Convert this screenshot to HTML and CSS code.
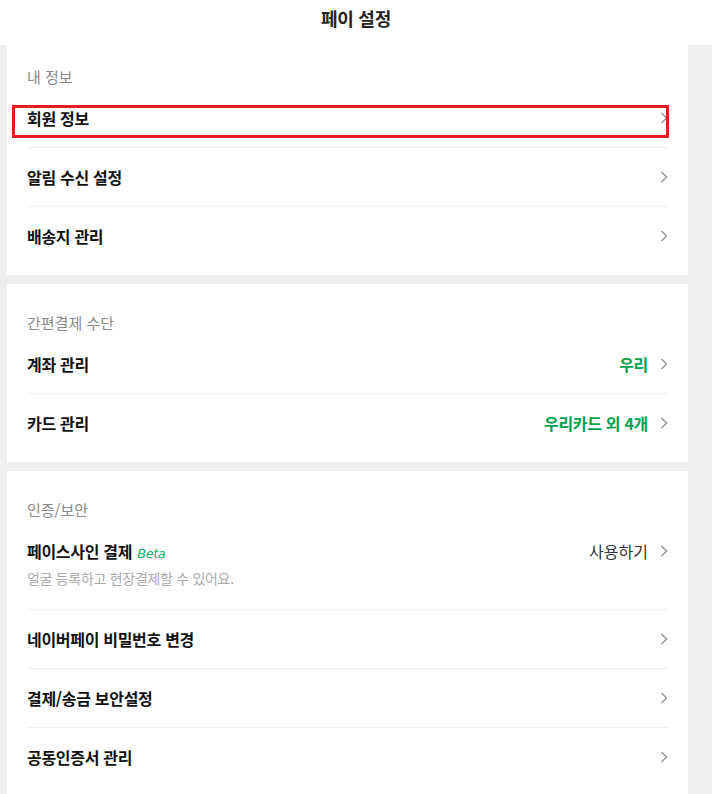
FILE: index.html
```html
<!DOCTYPE html>
<html lang="ko">
<head>
<meta charset="utf-8">
<title>페이 설정</title>
<link rel="stylesheet" href="styles.css">
</head>
<body>
<header class="top">
  <h1 class="top-title">페이 설정</h1>
</header>
<main class="page">
  <section class="card card-first">
    <h2 class="card-label">내 정보</h2>
    <div class="row row-marked">
      <span class="row-title">회원 정보</span>
      <span class="row-right"><svg class="chev" viewBox="0 0 8 12" width="8" height="12"><path d="M1.5 1 L6.5 6 L1.5 11" /></svg></span>
      <span class="mark"></span>
    </div>
    <div class="row">
      <span class="row-title">알림 수신 설정</span>
      <span class="row-right"><svg class="chev" viewBox="0 0 8 12" width="8" height="12"><path d="M1.5 1 L6.5 6 L1.5 11" /></svg></span>
    </div>
    <div class="row">
      <span class="row-title">배송지 관리</span>
      <span class="row-right"><svg class="chev" viewBox="0 0 8 12" width="8" height="12"><path d="M1.5 1 L6.5 6 L1.5 11" /></svg></span>
    </div>
  </section>

  <section class="card">
    <h2 class="card-label">간편결제 수단</h2>
    <div class="row">
      <span class="row-title">계좌 관리</span>
      <span class="row-right"><span class="value-green">우리</span><svg class="chev" viewBox="0 0 8 12" width="8" height="12"><path d="M1.5 1 L6.5 6 L1.5 11" /></svg></span>
    </div>
    <div class="row">
      <span class="row-title">카드 관리</span>
      <span class="row-right"><span class="value-green">우리카드 외 4개</span><svg class="chev" viewBox="0 0 8 12" width="8" height="12"><path d="M1.5 1 L6.5 6 L1.5 11" /></svg></span>
    </div>
  </section>

  <section class="card card-last">
    <h2 class="card-label">인증/보안</h2>
    <div class="row row-top">
      <div class="row-main">
        <span class="row-title">페이스사인 결제 <span class="beta">Beta</span></span>
        <p class="row-sub">얼굴 등록하고 현장결제할 수 있어요.</p>
      </div>
      <span class="row-right"><span class="value-plain">사용하기</span><svg class="chev" viewBox="0 0 8 12" width="8" height="12"><path d="M1.5 1 L6.5 6 L1.5 11" /></svg></span>
    </div>
    <div class="row">
      <span class="row-title">네이버페이 비밀번호 변경</span>
      <span class="row-right"><svg class="chev" viewBox="0 0 8 12" width="8" height="12"><path d="M1.5 1 L6.5 6 L1.5 11" /></svg></span>
    </div>
    <div class="row">
      <span class="row-title">결제/송금 보안설정</span>
      <span class="row-right"><svg class="chev" viewBox="0 0 8 12" width="8" height="12"><path d="M1.5 1 L6.5 6 L1.5 11" /></svg></span>
    </div>
    <div class="row">
      <span class="row-title">공동인증서 관리</span>
      <span class="row-right"><svg class="chev" viewBox="0 0 8 12" width="8" height="12"><path d="M1.5 1 L6.5 6 L1.5 11" /></svg></span>
    </div>
  </section>
</main>
</body>
</html>
```

FILE: styles.css
```css
* { box-sizing: border-box; }

html, body {
  margin: 0;
  padding: 0;
  background: #eeeeee;
  font-family: "Noto Sans CJK KR", "Noto Sans", sans-serif;
  color: #111;
}

.top {
  height: 45px;
  background: #fff;
  display: flex;
  justify-content: center;
  padding-top: 7px;
}

.top-title {
  margin: 0;
  font-size: 18px;
  font-weight: 700;
  letter-spacing: -0.3px;
  color: #222;
  line-height: 22px;
}

.page {
  display: flex;
  flex-direction: column;
  gap: 9px;
  padding: 0 24px 0 7px;
}

.card {
  background: #fff;
  padding: 29px 20px 10px;
}

.card-first { padding-top: 22px; }
.card-last { padding-bottom: 40px; }

.card-label {
  margin: 0 0 2px;
  font-size: 15px;
  font-weight: 400;
  line-height: 20px;
  letter-spacing: 0;
  color: #888;
}

.row {
  position: relative;
  display: flex;
  align-items: center;
  justify-content: space-between;
  padding: 18px 0;
  border-bottom: 1px solid #f1f1f1;
}

.row:last-child { border-bottom: none; }

.row-top {
  align-items: flex-start;
  padding-bottom: 21px;
}

.row-title {
  font-size: 16px;
  font-weight: 700;
  line-height: 22px;
  letter-spacing: -0.3px;
  color: #111;
}

.row-main {
  display: flex;
  flex-direction: column;
}

.row-sub {
  margin: 3px 0 0;
  font-size: 14px;
  line-height: 20px;
  letter-spacing: -0.3px;
  color: #a9a9a9;
}

.beta {
  font-family: "DejaVu Sans", sans-serif;
  font-style: italic;
  font-weight: 400;
  font-size: 13px;
  letter-spacing: -0.5px;
  color: #10b15a;
  margin-left: 1px;
}

.row-right {
  display: flex;
  align-items: center;
  gap: 12px;
  height: 22px;
}

.value-green {
  font-size: 16px;
  font-weight: 700;
  line-height: 22px;
  letter-spacing: -0.3px;
  color: #03a14b;
}

.value-plain {
  font-size: 16px;
  font-weight: 400;
  line-height: 22px;
  letter-spacing: 0;
  color: #333;
}

.chev {
  display: block;
  fill: none;
  stroke: #999;
  stroke-width: 1.5;
}

.mark {
  position: absolute;
  top: 16px;
  left: -15px;
  right: -1px;
  height: 33px;
  border: 3px solid #e21f1f;
  pointer-events: none;
}
```
